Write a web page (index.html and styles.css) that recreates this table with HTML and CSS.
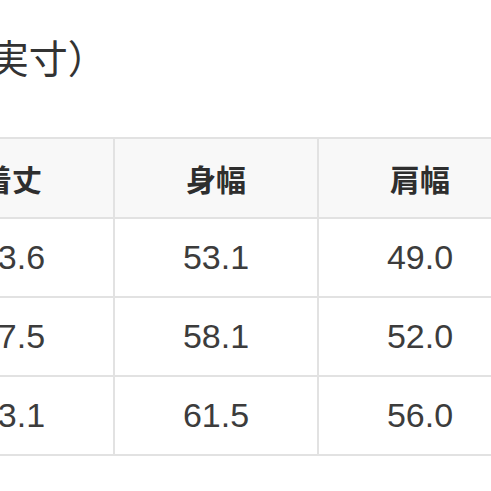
FILE: index.html
```html
<!DOCTYPE html>
<html lang="ja">
<head>
<meta charset="utf-8">
<link rel="stylesheet" href="styles.css">
</head>
<body>
<div class="page">
  <h2 class="title">サイズ（実寸）</h2>
  <div class="size-table">
    <div class="cell head">着丈</div>
    <div class="cell head">身幅</div>
    <div class="cell head">肩幅</div>
    <div class="cell num">73.6</div>
    <div class="cell num">53.1</div>
    <div class="cell num">49.0</div>
    <div class="cell num">77.5</div>
    <div class="cell num">58.1</div>
    <div class="cell num">52.0</div>
    <div class="cell num">83.1</div>
    <div class="cell num">61.5</div>
    <div class="cell num">56.0</div>
  </div>
</div>
</body>
</html>
```
FILE: styles.css
```css
html, body {
  margin: 0;
  padding: 0;
  background: #ffffff;
  overflow: hidden;
}
.page {
  width: 491px;
  height: 491px;
  overflow: hidden;
}
.title {
  margin: 30px 0 55px -165px;
  font-family: "Noto Sans CJK JP", sans-serif;
  font-size: 39px;
  font-weight: 400;
  line-height: 52px;
  color: #333333;
  white-space: nowrap;
}
.size-table {
  display: grid;
  grid-template-columns: repeat(3, 204px);
  grid-auto-rows: 79px;
  grid-template-rows: 80px;
  margin-left: -91px;
  width: max-content;
  border-top: 2px solid #e2e2e2;
  border-left: 2px solid #e2e2e2;
}
.cell {
  box-sizing: border-box;
  display: flex;
  align-items: center;
  justify-content: center;
  border-right: 2px solid #e2e2e2;
  border-bottom: 2px solid #e2e2e2;
}
.head {
  background: #f8f8f8;
  font-family: "Noto Sans CJK JP", sans-serif;
  font-size: 30px;
  font-weight: 700;
  color: #2e2e2e;
}
.num {
  font-family: "Liberation Sans", Arial, sans-serif;
  font-size: 34px;
  color: #3c3c3c;
}
```
